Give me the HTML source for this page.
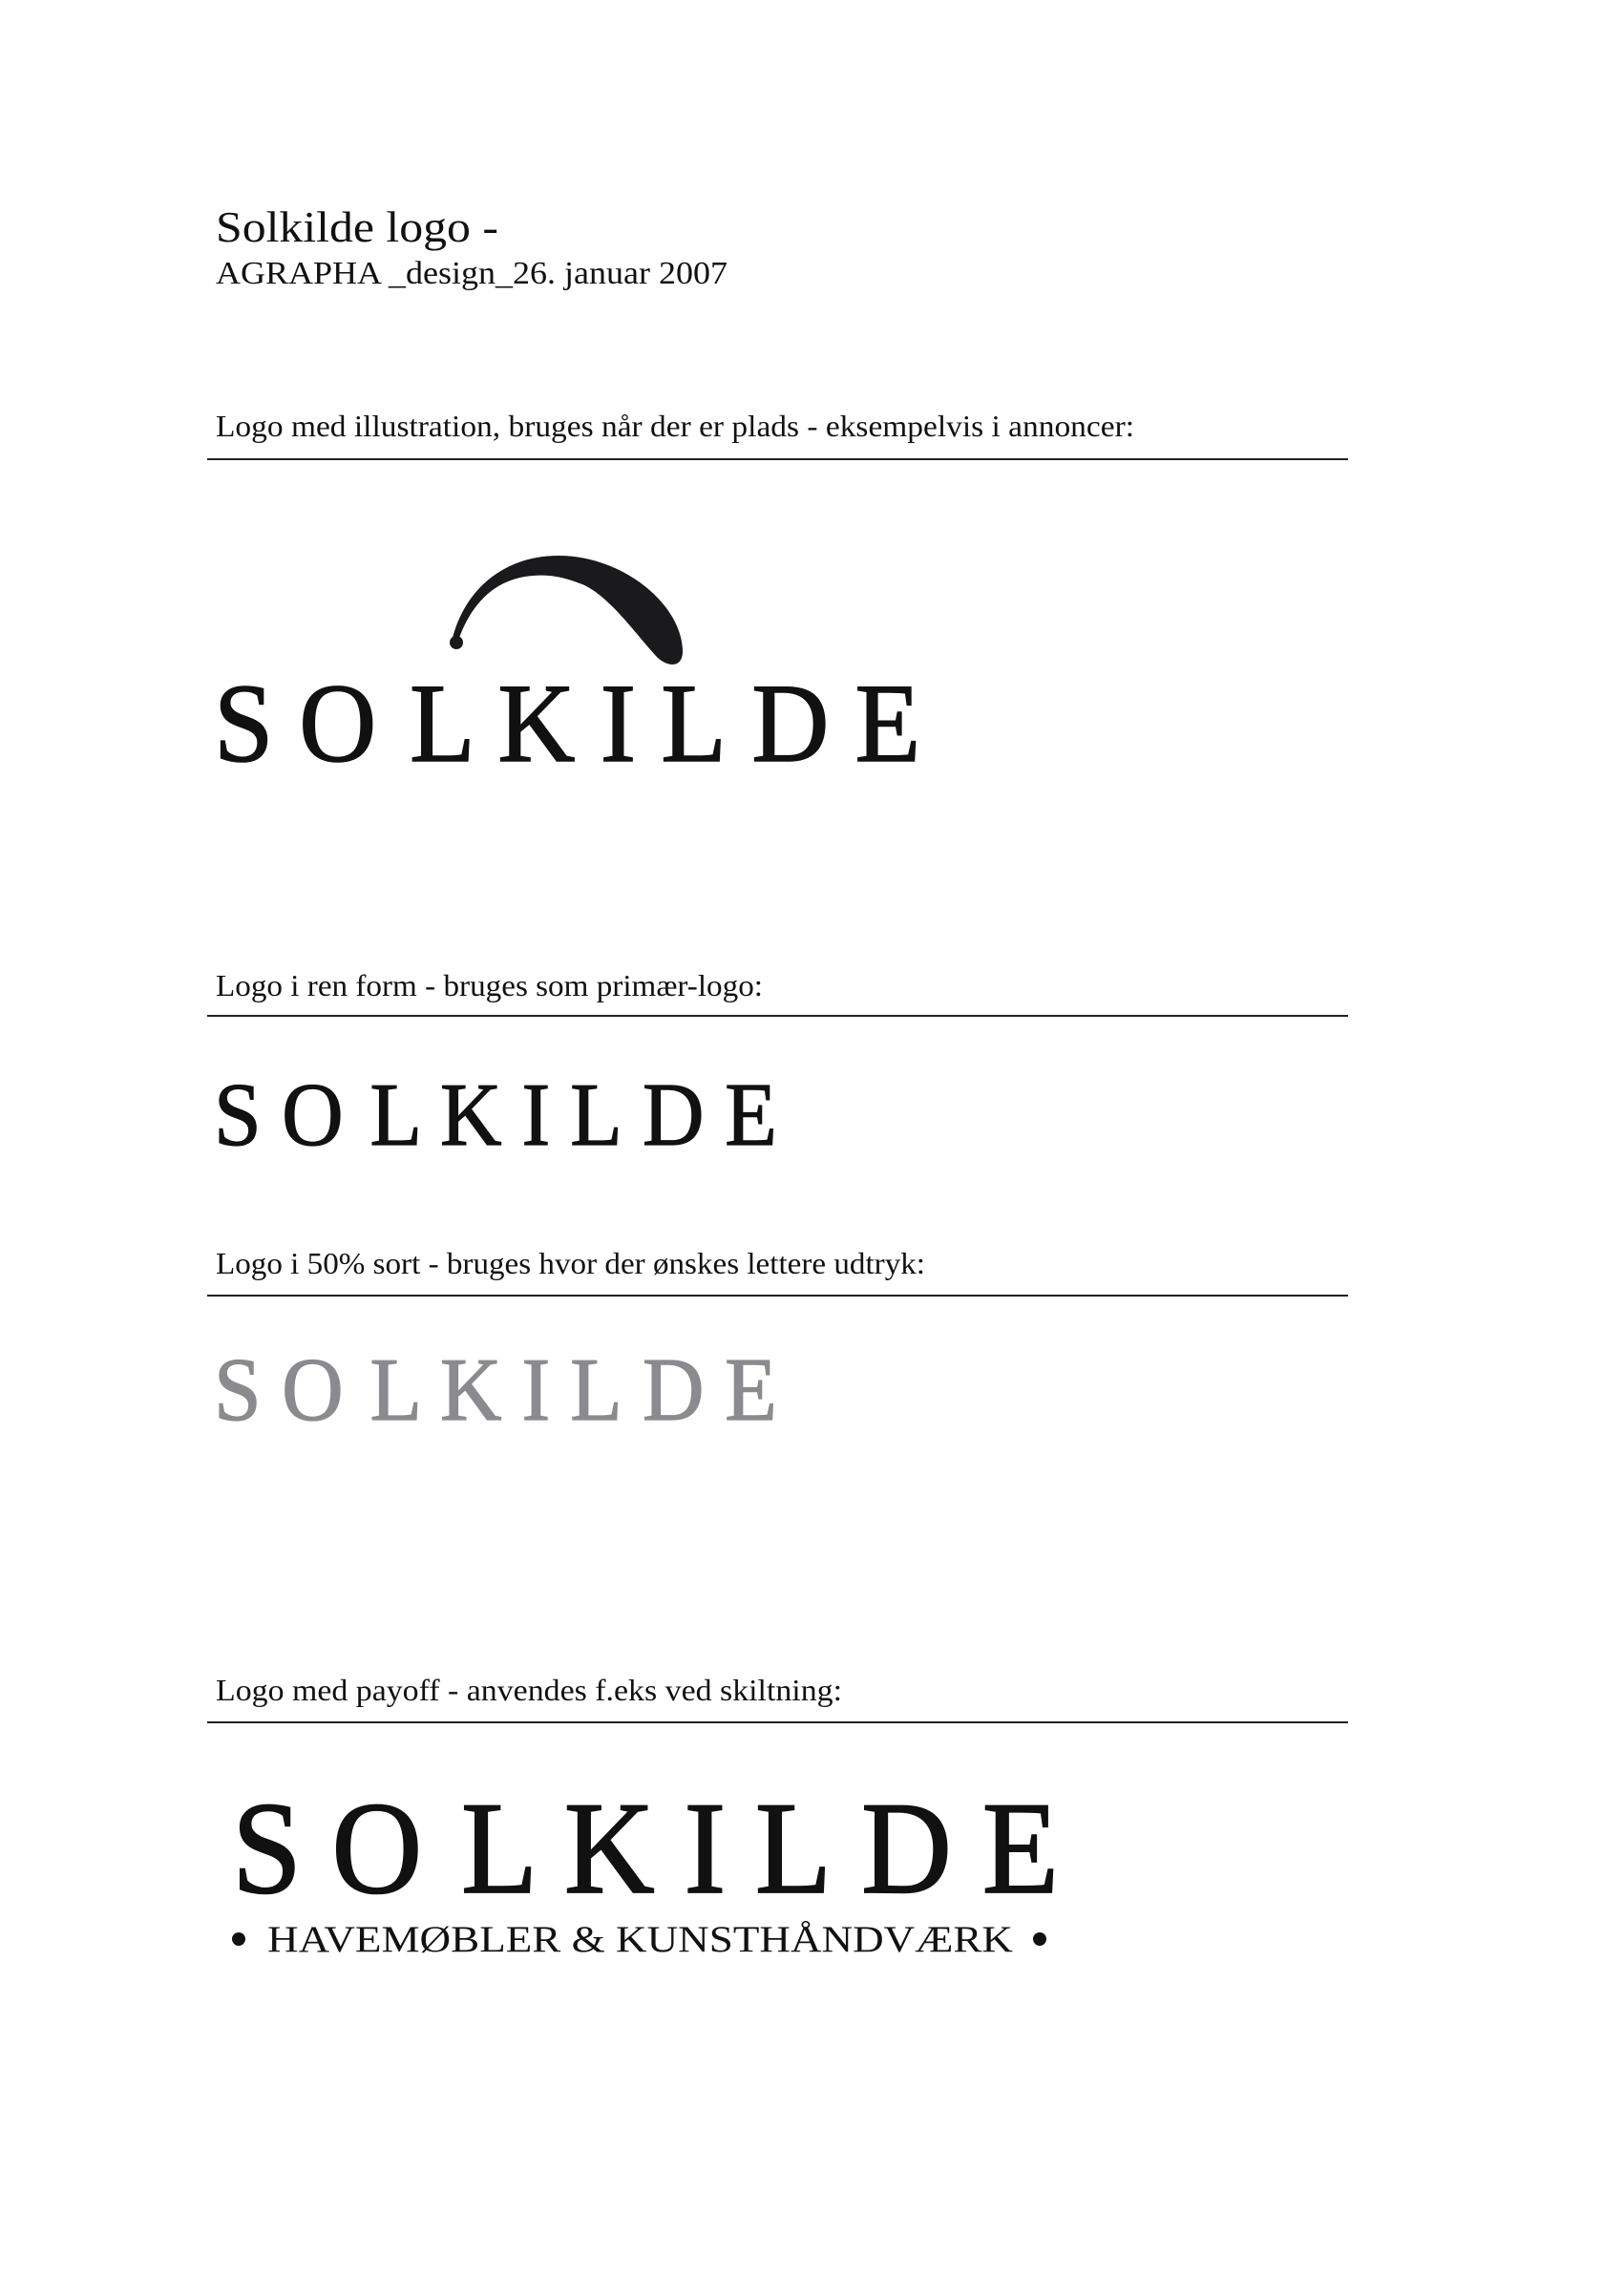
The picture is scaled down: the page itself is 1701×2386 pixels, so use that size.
<!DOCTYPE html>
<html><head><meta charset="utf-8"><style>
html,body{margin:0;padding:0;background:#fff;}
svg{display:block}
text{font-family:"Liberation Serif",serif;fill:#111;}
.lg{stroke:#111;stroke-width:1.6;}
</style></head><body>
<svg width="1701" height="2386" viewBox="0 0 1701 2386" xmlns="http://www.w3.org/2000/svg">
<rect width="1701" height="2386" fill="#fff"/>
<text x="226" y="253" font-size="46" textLength="296" lengthAdjust="spacingAndGlyphs">Solkilde logo -</text>
<text x="226" y="297" font-size="34" textLength="536" lengthAdjust="spacingAndGlyphs">AGRAPHA _design_26. januar 2007</text>

<text x="226" y="457" font-size="32" textLength="962" lengthAdjust="spacingAndGlyphs">Logo med illustration, bruges når der er plads - eksempelvis  i annoncer:</text>
<rect x="217" y="480" width="1195" height="2" fill="#222"/>

<path fill="#1a1a1c" d="M474,668 C488,615 530,582 585,582 C650,582 712,630 715,680 C716,698 703,700 690,690 C670,670 640,625 610,612 C585,602 570,602 558,603 C520,606 495,630 481,668 Z"/>
<circle cx="478" cy="673" r="7" fill="#1a1a1c"/>

<g transform="translate(224,797)"><g transform="scale(0.95,1)">
<text class="lg" y="0" font-size="118" x="0 94 216 313 426 493 593 707">SOLKILDE</text></g></g>

<text x="226" y="1043" font-size="32" textLength="573" lengthAdjust="spacingAndGlyphs">Logo i ren form - bruges som primær-logo:</text>
<rect x="217" y="1063" width="1195" height="2" fill="#222"/>
<g transform="translate(224,1199) scale(0.797)"><g transform="scale(0.95,1)">
<text class="lg" y="0" font-size="118" x="0 94 216 313 426 493 593 707">SOLKILDE</text></g></g>

<text x="226" y="1334" font-size="32" textLength="743" lengthAdjust="spacingAndGlyphs">Logo i 50% sort - bruges hvor der ønskes lettere udtryk:</text>
<rect x="217" y="1356" width="1195" height="2" fill="#222"/>
<g transform="translate(224,1487) scale(0.797)"><g transform="scale(0.95,1)">
<text y="0" font-size="118" x="0 94 216 313 426 493 593 707" style="fill:#8b8b8f;stroke:#8b8b8f;stroke-width:1.6">SOLKILDE</text></g></g>

<text x="226" y="1781" font-size="32" textLength="656" lengthAdjust="spacingAndGlyphs">Logo med payoff - anvendes f.eks ved skiltning:</text>
<rect x="217" y="1803" width="1195" height="2" fill="#222"/>
<g transform="translate(243,1982) scale(1.17)"><g transform="scale(0.95,1)">
<text class="lg" y="0" font-size="118" x="0 94 216 313 426 493 593 707">SOLKILDE</text></g></g>
<circle cx="250" cy="2031" r="7" fill="#111"/>
<text x="280" y="2044" font-size="39" textLength="781" lengthAdjust="spacingAndGlyphs">HAVEMØBLER &amp; KUNSTHÅNDVÆRK</text>
<circle cx="1089" cy="2031" r="7" fill="#111"/>
</svg>
</body></html>
